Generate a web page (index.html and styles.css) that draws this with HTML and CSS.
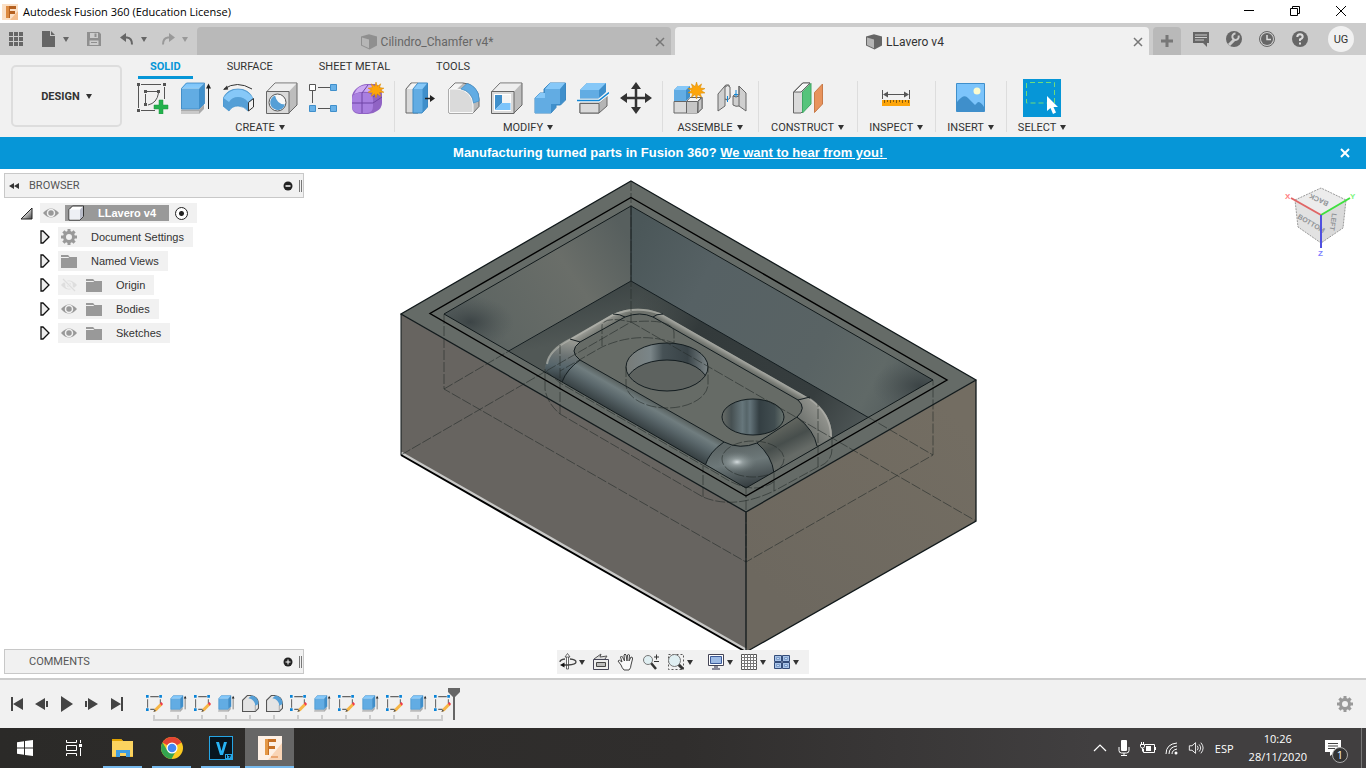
FILE: index.html
```html
<!DOCTYPE html>
<html lang="en">
  <head>
    <meta charset="UTF-8" />
    <title>Autodesk Fusion 360 (Education License)</title>
    <link rel="stylesheet" href="styles.css">
  </head>
  <body>
    <!-- shared icons -->
    <svg class="symbols" width="0" height="0" aria-hidden="true">
      <defs>
        <linearGradient id="blueTop" x1="0" y1="0" x2="0" y2="1">
          <stop offset="0" stop-color="#7cc4fb" /><stop offset="1" stop-color="#8ccdfb" />
        </linearGradient>
        <linearGradient id="arrowFill" x1="0" y1="0" x2="1" y2="1">
          <stop offset="0.3" stop-color="#fff" /><stop offset="1" stop-color="#444" />
        </linearGradient>
      </defs>
      <symbol id="i-cube" viewBox="0 0 16 16">
        <path d="M0 2.500 8 .300l8 2.200v9L8.500 15.500 0 11.500z" fill="#666" />
        <path d="M1 3.600 8 5.400v8.800L1 11z" fill="#b4b4b4" />
      </symbol>
      <symbol id="i-star" viewBox="0 0 16 16">
        <path d="M8 0l1.300 4.300L12.800 1.800 11.500 5.600 16 6.200 12.500 8l3.500 2.300-4.500.300 1.300 3.700-3.700-2.500L8 16 6.800 11.800 3.200 14.300l1.200-3.700L0 10.200 3.500 8 0 6.200l4.400-.6L3.200 1.800l3.600 2.500z" fill="#fda50a" stroke="#d98a00" stroke-width=".5" />
      </symbol>
      <symbol id="i-gear" viewBox="0 0 16 16">
        <path fill-rule="evenodd" fill="#999" d="M6.500 0h3v2.100l1.400.6L12.500 1.200l2.200 2.200-1.500 1.600.6 1.500H16v3h-2.200l-.6 1.500 1.500 1.600-2.200 2.200-1.600-1.500-1.400.6V16h-3v-2.100l-1.400-.6-1.600 1.500-2.200-2.200L2.800 11l-.6-1.500H0v-3h2.200L2.800 5 1.300 3.400l2.200-2.200 1.600 1.500 1.400-.6zM8 5a3 3 0 1 0 0 6 3 3 0 0 0 0-6z" />
      </symbol>
      <symbol id="i-eye" viewBox="0 0 16 16">
        <path d="M0 8Q8-1 16 8 8 17 0 8z" fill="#999" />
        <circle cx="8" cy="8" r="3.500" fill="none" stroke="#f1f1f1" stroke-width="1.500" />
        <circle cx="8" cy="8" r="1.500" fill="#999" />
      </symbol>
      <symbol id="i-eye-off" viewBox="0 0 16 16">
        <path d="M0 8Q8-1 16 8 8 17 0 8z" fill="#dedede" />
        <circle cx="8" cy="8" r="3" fill="none" stroke="#f1f1f1" stroke-width="1.500" />
        <path d="M2 2l12 12" stroke="#f1f1f1" stroke-width="3" /><path d="M2 2l12 12" stroke="#dedede" stroke-width="1.200" />
      </symbol>
      <symbol id="i-folder" viewBox="0 0 16 16">
        <path d="M0 2h7l2 2h7v11H0z" fill="#999" /><path d="M0 4.500h7.500l1-1" fill="none" stroke="#f1f1f1" />
      </symbol>
      <symbol id="i-expand" viewBox="0 0 10 14">
        <path d="M1 1h2l6 6-6 6H1z" fill="#eee" stroke="#111" stroke-width="1.300" />
      </symbol>
      <symbol id="i-extrude" viewBox="0 0 32 32">
        <path d="M1 27.500h18l5-5v4.500l-5 5H1z" fill="#aaa" /><path d="M1 29h18v3H1z" fill="#c9c9c9" />
        <path d="M1 6.500 6 1h18.500L19 6.500z" fill="url(#blueTop)" />
        <path d="M1 6.500h18V27H1z" fill="#62ace3" /><path d="M19 6.500 24.500 1v20.500L19 27z" fill="#3f8fcb" />
        <path d="M1.500 27V6.500l5-5.500H24.500v20.500L19 27z" fill="none" stroke="#3b87c1" stroke-width=".8" />
        <path d="M28.500 27V4" stroke="#222" /><path d="M26 6.500 28.500 1.500 31 6.500z" fill="#222" />
      </symbol>
      <symbol id="i-fillet" viewBox="0 0 32 32">
        <path d="M1 31V7l6-6h8a16 16 0 0 1 16 16v7.500L25 31z" fill="#b9b9b9" stroke="#666" />
        <path d="M1.500 7 7 1.500h8L9 7z" fill="#f4f4f4" />
        <path d="M1.500 30.500V7H9a16 16 0 0 1 16 16v7.500z" fill="#dadada" stroke="#fafafa" />
        <path d="M13 7l6-5.500A15.500 15.500 0 0 1 31 17v2l-5.500 2A15 15 0 0 0 13 7z" fill="#62ace3" stroke="#3f8fcb" stroke-width=".7" />
      </symbol>
      <symbol id="i-tfillet" viewBox="0 0 16 16">
        <path d="M.500 15.500V5L5 .500h3q7.500 1 7.500 8v4l-3 3z" fill="#e4e4e4" stroke="#555" />
        <path d="M12.500 15V9.500" stroke="#aaa" />
        <path d="M6 3l3-2.500q6.500 1 6.500 8L12.500 10Q12 4 6 3z" fill="#559fd6" />
      </symbol>
      <symbol id="i-tsketch" viewBox="0 0 16 16">
        <path d="M4 1.500h8M1.500 4v8M13.500 4v4M4 13.500h4" fill="none" stroke="#666" />
        <path d="M0 0h2.500v2.500H0zM12.500 0H15v2.500h-2.500zM0 12.500h2.500V15H0z" fill="#0a84d8" />
        <path d="M7 16l1.500-3.500 5-5 2 2-5.500 5.500z" fill="#f7b646" />
        <path d="M13 8 14.500 6.500 16 8.500 14.800 10z" fill="#f23b4c" /><path d="M7 16l1-2.500 1.500 1.500z" fill="#555" />
      </symbol>
      <symbol id="i-mini-x" viewBox="0 0 10 10"><path d="M1 1l8 8M9 1L1 9" fill="none" stroke="currentColor" stroke-width="1.500" /></symbol>
    </svg>

    <header class="titlebar">
      <svg class="app-icon" viewBox="0 0 16 16">
        <rect width="16" height="16" fill="#fbe0c6" /><path d="M8 16h8V7z" fill="#f4bd8c" />
        <path d="M4 2h10v3H8v2h5v3H8v4H4z" fill="#b5601f" /><path d="M4 2h3v12H4z" fill="#dd8a40" />
      </svg>
      <h1>Autodesk Fusion 360 (Education License)</h1>
      <div class="window-buttons">
        <button aria-label="Minimize"><svg viewBox="0 0 12 12"><path d="M1 5.500h10" /></svg></button>
        <button aria-label="Restore"><svg viewBox="0 0 12 12"><path d="M1.500 3.500h7v7h-7zM3.500 3.500v-2h7v7h-2" /></svg></button>
        <button aria-label="Close"><svg viewBox="0 0 12 12"><path d="M1 1l10 10M11 1L1 11" /></svg></button>
      </div>
    </header>

    <nav class="tabbar">
      <div class="quick">
        <button aria-label="Data panel"><svg viewBox="0 0 16 16" fill="#666"><path d="M1 1h4v4H1zM6 1h4v4H6zM11 1h4v4h-4zM1 6h4v4H1zM6 6h4v4H6zM11 6h4v4h-4zM1 11h4v4H1zM6 11h4v4H6zM11 11h4v4h-4z" /></svg></button>
        <button class="with-caret" aria-label="File"><svg viewBox="0 0 16 16"><path d="M1 0h8v5h5v11H1z" fill="#666" /><path d="M10 0l4 4h-4z" fill="#666" /></svg><i class="caret"></i></button>
        <button aria-label="Save"><svg viewBox="0 0 16 16"><path d="M1 1h12l2 2v12H1z" fill="#8f8f8f" /><path d="M4 2h8v5H4zM3.500 9.500h9V14h-9z" fill="#ccc" /><path d="M8.500 2.500h2v3.500h-2zM5 11h6v1H5z" fill="#8f8f8f" /></svg></button>
        <button class="with-caret" aria-label="Undo"><svg viewBox="0 0 16 16"><path d="M4 6.500h4q5 .500 5 7" fill="none" stroke="#666" stroke-width="2" /><path d="M7 2v9L1 6.500z" fill="#666" /></svg><i class="caret"></i></button>
        <button class="with-caret dim" aria-label="Redo"><svg viewBox="0 0 16 16"><path d="M12 6.500H8q-5 .500-5 7" fill="none" stroke="#999" stroke-width="2" /><path d="M9 2v9l6-4.500z" fill="#999" /></svg><i class="caret"></i></button>
      </div>
      <div class="tab">
        <svg class="faded" viewBox="0 0 16 16"><use href="#i-cube" /></svg>
        <span>Cilindro_Chamfer v4*</span>
        <button aria-label="Close Cilindro_Chamfer"><svg><use href="#i-mini-x" /></svg></button>
      </div>
      <div class="tab active">
        <svg viewBox="0 0 16 16"><use href="#i-cube" /></svg>
        <span>LLavero v4</span>
        <button aria-label="Close LLavero"><svg><use href="#i-mini-x" /></svg></button>
      </div>
      <button class="new-tab" aria-label="New design"><svg viewBox="0 0 14 14"><path d="M7 1v12M1 7h12" stroke="#777" stroke-width="3" /></svg></button>
      <div class="account">
        <button aria-label="Notifications"><svg viewBox="0 0 18 18"><path d="M1 2h16v11h-2v4l-4-4H1z" fill="#666" /><path d="M3 5h12M3 7.500h12M3 10h9" stroke="#ccc" /></svg></button>
        <button aria-label="Extensions"><svg viewBox="0 0 18 18"><circle cx="9" cy="9" r="8" fill="#666" /><path d="M4 15l5.500-5.500" stroke="#ccc" stroke-width="3" /><path d="M13.500 5.500a3.200 3.200 0 1 1-3-2" fill="none" stroke="#ccc" stroke-width="2" /></svg></button>
        <button aria-label="Job status"><svg viewBox="0 0 18 18"><circle cx="9" cy="9" r="7.500" fill="#ccc" stroke="#666" /><circle cx="9" cy="9" r="6" fill="#666" /><path d="M9 5v4.500h4" fill="none" stroke="#ddd" stroke-width="1.500" /></svg></button>
        <button aria-label="Help"><svg viewBox="0 0 18 18"><circle cx="9" cy="9" r="8" fill="#666" /><path d="M6.300 7q0-2.700 2.700-2.700T11.700 7Q11.500 8.500 9 9.500V11" fill="none" stroke="#ddd" stroke-width="2" /><path d="M8 12.500h2v2H8z" fill="#ddd" /></svg></button>
        <button class="avatar">UG</button>
      </div>
    </nav>

    <section class="ribbon">
      <button class="workspace">DESIGN <i class="caret"></i></button>
      <div class="ribbon-main">
        <div class="ribbon-tabs">
          <a href="#" class="current">SOLID</a>
          <a href="#">SURFACE</a>
          <a href="#">SHEET METAL</a>
          <a href="#">TOOLS</a>
        </div>
        <div class="groups">
          <div class="group">
            <div class="tools">
              <button aria-label="Create sketch"><svg viewBox="0 0 32 32"><path d="M4 2.500h20M1.500 4v22M27.500 5v12M4 28.500h14M8.500 12v10M10 9.500h11M21.500 11Q20 21 11 23" fill="none" stroke="#555" /><path d="M0 1h3v3H0zM26 1h3v3h-3zM0 27h3v3H0zM7 8h3v3H7zM20 8h3v3h-3zM7 21h3v3H7z" fill="#555" /><path d="M22 18h4v5h5v4h-5v5h-4v-5h-5v-4h5z" fill="#22b14c" stroke="#1c953e" stroke-width=".5" /></svg></button>
              <button aria-label="Extrude"><svg><use href="#i-extrude" /></svg></button>
              <button aria-label="Revolve"><svg viewBox="0 0 32 32"><path d="M0 16.500Q4 7 15 7t15 9.500l-5 12.500q-4-5-10-5T6 29L0 24z" fill="#559fd6" stroke="#3f8fcb" stroke-width=".7" /><path d="M.500 16Q6 7.500 15 7.500T30 16l-5 4q-4-5-10-5T6 20z" fill="#86c8f8" /><path d="M25.500 20.500l5-4v8.500l-5 4z" fill="#f2f2f2" stroke="#333" /><path d="M1 7q13-9 28 0" fill="none" stroke="#333" /><path d="M0 8l4-4.500 1.200 4z" fill="#333" /></svg></button>
              <button aria-label="Hole"><svg viewBox="0 0 32 32"><path d="M1 9.500 9 1h22v22l-8 8z" fill="#bdbdbd" stroke="#666" /><path d="M1.500 9.500 9 1.500h21.500L23 9.500z" fill="#eee" /><path d="M.500 9.500H23v22H.500z" fill="#dadada" stroke="#666" /><circle cx="11.500" cy="20.500" r="8.500" fill="#f8f8f8" stroke="#555" /><path d="M9 13.500a7.500 7.500 0 1 0 10 9q-8 0-10-9z" fill="#559fd6" /></svg></button>
              <button aria-label="Pattern"><svg viewBox="0 0 32 32"><path d="M9 5.500h12M3.500 9v12M9 26.500h12" stroke="#555" /><path d="M.500 2.500h6v6h-6z" fill="#fff" stroke="#555" /><path d="M21.500 2.500h6v6h-6zM.500 23.500h6v6h-6zM21.500 23.500h6v6h-6z" fill="#6ab2e8" stroke="#3f8fcb" /></svg></button>
              <button aria-label="Create form"><svg viewBox="0 0 32 32"><path d="M0 15q0-5 5-9t10-4h8q7 2 7 10v9q0 5-5 8-4 3-9 3H7q-7-1-7-7z" fill="#9063c4" /><path d="M5 7q4-4 11-4t10 3l-6 5q-9-3-18 1z" fill="#cdaaf4" /><path d="M0 17q0-5 6-6h10q5 1 5 7v6q0 7-6 7H7q-7-1-7-7z" fill="#a97fe0" /><path d="M10 11v20M0 21h21l9-6M10 11l6-8M21 15l9-6" fill="none" stroke="#6f45a5" /><svg x="16" y="0" width="16" height="16"><use href="#i-star" /></svg></svg></button>
            </div>
            <button class="group-label">CREATE <i class="caret"></i></button>
          </div>
          <div class="group">
            <div class="tools">
              <button aria-label="Press pull"><svg viewBox="0 0 32 32"><path d="M1 7l5-6h7v30H1z" fill="#dadada" stroke="#666" /><path d="M2 7l5-5.500h6V7z" fill="#f5f5f5" /><path d="M8 7l5-6h9.500v24L17 31H8z" fill="#3f8fcb" stroke="#3b87c1" /><path d="M8.500 7h9v23.500h-9z" fill="#62ace3" /><path d="M8.500 7 13 1.500h9L17.500 7z" fill="#86c8f8" /><path d="M20 16.500h6" stroke="#222" stroke-width="1.500" /><path d="M25 13l5 3.500-5 3.500z" fill="#222" /></svg></button>
              <button aria-label="Fillet"><svg><use href="#i-fillet" /></svg></button>
              <button aria-label="Shell"><svg viewBox="0 0 32 32"><path d="M1 9.500 9 1h22v22l-8 8z" fill="#bdbdbd" stroke="#666" /><path d="M1.500 9.500 9 1.500h21.500L23 9.500z" fill="#eee" /><path d="M.500 9.500H23v22H.500z" fill="#dadada" stroke="#666" /><path d="M3 12h17v17H3z" fill="#fff" /><path d="M4 13h7v8l-7 7z" fill="#3f8fcb" /><path d="M11 13h8.500v8H11z" fill="#f4f4f4" /><path d="M4 28l7-7h8.500v7z" fill="#7cc4fb" /></svg></button>
              <button aria-label="Combine"><svg viewBox="0 0 32 32"><path d="M1 16l5-5h4V7l6-6h15.500v17l-5 5H22v2.500L17 31H1z" fill="#3f8fcb" stroke="#3b87c1" /><path d="M1 16h10V7h15v15h-9v9H1z" fill="#62ace3" /><path d="M1 16l5-5h5v5zM11 7l5-6h15l-5 6z" fill="#86c8f8" /></svg></button>
              <button aria-label="Split body"><svg viewBox="0 0 32 32"><path d="M3 8l7-7h19v9l-6 7H3z" fill="#3f8fcb" /><path d="M3 8l7-7h19l-7 7z" fill="#86c8f8" /><path d="M3 8h19v8H3z" fill="#62ace3" /><path d="M3 21h19l8-7v10l-8 7H3z" fill="#b5b5b5" stroke="#666" /><path d="M3 21.500h19V31H3z" fill="#dadada" stroke="#666" /><path d="M0 18.500h22l10-8" fill="none" stroke="#f6f6f6" stroke-width="4" /><path d="M0 18.500h22l10-8" fill="none" stroke="#1187d6" stroke-width="1.500" /></svg></button>
              <button aria-label="Move"><svg viewBox="0 0 32 32"><path d="M16 5v22M5 16h22" stroke="#333" stroke-width="2.500" /><path d="M16 0l5 7H11zM16 32l5-7H11zM0 16l7-5v10zM32 16l-7-5v10z" fill="#333" /></svg></button>
            </div>
            <button class="group-label">MODIFY <i class="caret"></i></button>
          </div>
          <div class="group">
            <div class="tools">
              <button aria-label="New component"><svg viewBox="0 0 32 32"><path d="M1 19.500h15l4-4h9v11L24.500 31H1z" fill="#dadada" stroke="#666" /><path d="M13.500 31V19.500H25V31M25 19.500l4-4v11l-4.500 4.500z" fill="#c6c6c6" stroke="#666" /><path d="M13.500 19.500h11l4-4H17z" fill="#f5f5f5" stroke="#666" /><path d="M1 8l4-4h12v11l-4 4H1z" fill="#3f8fcb" /><path d="M1 8h12v11H1z" fill="#62ace3" /><path d="M1 8l4-4h12l-4 4z" fill="#86c8f8" /><svg x="15" y="0" width="17" height="17"><use href="#i-star" /></svg></svg></button>
              <button aria-label="Joint"><svg viewBox="0 0 32 32"><path d="M2 12 8 5q1-3 5-2l1 12-3 3-2-1v7l-7 5z" fill="#cfcfcf" stroke="#666" /><path d="M9 5v12q3 2 5-1V5q-2-3-5 0z" fill="#e8e8e8" stroke="#666" /><path d="M30 29V11l-7-7v9q-4-2-6 1v9q3 2 6 1z" fill="#cfcfcf" stroke="#666" /><path d="M23 4v20M17 14q3 2 6 0" fill="none" stroke="#666" /><path d="M11.500 14v6M20 8v7M18 12.500h4" stroke="#1187d6" /></svg></button>
            </div>
            <button class="group-label">ASSEMBLE <i class="caret"></i></button>
          </div>
          <div class="group">
            <div class="tools">
              <button aria-label="Construct plane"><svg viewBox="0 0 32 32"><path d="M1.500 31V10l9-9H18v21l-9 9z" fill="#dadada" stroke="#666" /><path d="M2 10l9-9h7l-9 9z" fill="#f8f8f8" stroke="#666" /><path d="M10.500 31V10L19 1.500V22z" fill="#56c47b" stroke="#3fa864" /><path d="M22.500 30.500V10.500l8-8.500v20z" fill="#e8935c" stroke="#c87a48" /></svg></button>
            </div>
            <button class="group-label">CONSTRUCT <i class="caret"></i></button>
          </div>
          <div class="group">
            <div class="tools">
              <button aria-label="Measure"><svg viewBox="0 0 32 32"><path d="M2.500 8v9M29.500 8v9M4 12.500h24" stroke="#555" /><path d="M3 12.500l5-3v6zM29 12.500l-5-3v6z" fill="#555" /><path d="M2 18h28v6H2z" fill="#fda50a" /><path d="M4.500 18v3M7.500 18v2M10.500 18v3M13.500 18v2M16.500 18v3M19.500 18v2M22.500 18v3M25.500 18v2M28.500 18v3" stroke="#8a5b08" /></svg></button>
            </div>
            <button class="group-label">INSPECT <i class="caret"></i></button>
          </div>
          <div class="group">
            <div class="tools">
              <button aria-label="Insert"><svg viewBox="0 0 32 32"><path d="M1.500 1.500h28v28h-28z" fill="#7cc4fb" stroke="#3f8fcb" /><path d="M2 20q7-9 11-4l7 7 3-3q3 0 6 5v4H2z" fill="#3f8fcb" /><circle cx="22" cy="9" r="3.500" fill="#fbfbcf" /></svg></button>
            </div>
            <button class="group-label">INSERT <i class="caret"></i></button>
          </div>
          <div class="group">
            <div class="tools">
              <button aria-label="Select" class="selected"><svg viewBox="0 0 32 32"><path d="M.500 1v20h28V.500H1" fill="none" stroke="#6fdc7b" stroke-dasharray="5 3" /><path d="M21 14v15l3.500-3 2.500 6 3-1.500L27.500 25H32z" fill="#fff" /></svg></button>
            </div>
            <button class="group-label">SELECT <i class="caret"></i></button>
          </div>
        </div>
      </div>
    </section>

    <div class="banner">
      <p>Manufacturing turned parts in Fusion 360? <a href="#">We want to hear from you!&nbsp;</a></p>
      <button aria-label="Dismiss"><svg viewBox="0 0 10 10"><path d="M1 1l8 8M9 1L1 9" stroke="#fff" stroke-width="2" /></svg></button>
    </div>

    <main class="viewport">
      <svg class="model" viewBox="0 169 1366 509" preserveAspectRatio="xMidYMid meet" role="img" aria-label="LLavero model">
        <defs>
          <linearGradient id="leftWall" gradientUnits="userSpaceOnUse" x1="470" y1="350" x2="631" y2="240">
            <stop offset="0" stop-color="#535b5b" /><stop offset=".2" stop-color="#5f6663" /><stop offset=".65" stop-color="#6a6e69" /><stop offset="1" stop-color="#575f5e" />
          </linearGradient>
          <linearGradient id="rightWall" gradientUnits="userSpaceOnUse" x1="631" y1="240" x2="920" y2="400">
            <stop offset="0" stop-color="#4b5759" /><stop offset=".25" stop-color="#566164" /><stop offset=".65" stop-color="#596364" /><stop offset=".85" stop-color="#606967" /><stop offset="1" stop-color="#50595a" />
          </linearGradient>
          <radialGradient id="corner"><stop offset="0" stop-color="#394143" stop-opacity=".9" /><stop offset=".5" stop-color="#424a4b" stop-opacity=".45" /><stop offset="1" stop-color="#4a5354" stop-opacity="0" /></radialGradient>
          <linearGradient id="floor" gradientUnits="userSpaceOnUse" x1="631" y1="281" x2="640" y2="330">
            <stop offset="0" stop-color="#3d4545" /><stop offset="1" stop-color="#515856" />
          </linearGradient>
          <linearGradient id="floorRight" gradientUnits="userSpaceOnUse" x1="640" y1="295" x2="870" y2="430">
            <stop offset="0" stop-color="#333a3b" stop-opacity="0" /><stop offset=".25" stop-color="#333a3b" /><stop offset=".75" stop-color="#363d3e" /><stop offset="1" stop-color="#525a5a" />
          </linearGradient>
          <linearGradient id="frontFillet" gradientUnits="userSpaceOnUse" x1="652" y1="401" x2="636" y2="429">
            <stop offset="0" stop-color="#59615f" /><stop offset=".2" stop-color="#707d7f" /><stop offset=".45" stop-color="#5b686c" /><stop offset="1" stop-color="#2d3537" />
          </linearGradient>
          <linearGradient id="rightFillet" gradientUnits="userSpaceOnUse" x1="777" y1="429" x2="791" y2="456">
            <stop offset="0" stop-color="#60645e" /><stop offset=".5" stop-color="#474e4c" /><stop offset="1" stop-color="#666b67" />
          </linearGradient>
          <linearGradient id="backFillet" gradientUnits="userSpaceOnUse" x1="725" y1="358" x2="729" y2="351">
            <stop offset="0" stop-color="#656a65" /><stop offset=".35" stop-color="#7d807a" /><stop offset="1" stop-color="#b6b7b1" />
          </linearGradient>
          <linearGradient id="leftFillet" gradientUnits="userSpaceOnUse" x1="603" y1="330" x2="598" y2="322">
            <stop offset="0" stop-color="#6e726c" /><stop offset="1" stop-color="#a2a39d" />
          </linearGradient>
          <linearGradient id="farCorner" gradientUnits="userSpaceOnUse" x1="567" y1="342" x2="562" y2="380">
            <stop offset="0" stop-color="#93958f" /><stop offset=".35" stop-color="#6d7474" /><stop offset=".65" stop-color="#56656b" /><stop offset="1" stop-color="#333c3f" />
          </linearGradient>
          <linearGradient id="sideCorner" gradientUnits="userSpaceOnUse" x1="804" y1="430" x2="828" y2="412">
            <stop offset="0" stop-color="#6b6f6b" /><stop offset="1" stop-color="#9a9b95" />
          </linearGradient>
          <linearGradient id="nearCorner" gradientUnits="userSpaceOnUse" x1="740" y1="445" x2="748" y2="487">
            <stop offset="0" stop-color="#5d6666" /><stop offset=".4" stop-color="#6d7879" /><stop offset="1" stop-color="#353d40" />
          </linearGradient>
          <radialGradient id="shine"><stop offset="0" stop-color="#d6dddf" /><stop offset=".3" stop-color="#a1abac" stop-opacity=".7" /><stop offset="1" stop-color="#6d7879" stop-opacity="0" /></radialGradient>
          <linearGradient id="holeWall">
            <stop offset="0" stop-color="#777b78" /><stop offset=".3" stop-color="#7a8588" /><stop offset=".45" stop-color="#465155" /><stop offset=".75" stop-color="#394347" /><stop offset="1" stop-color="#7c8587" />
          </linearGradient>
          <linearGradient id="holeDeep">
            <stop offset="0" stop-color="#696d68" /><stop offset=".15" stop-color="#465052" /><stop offset=".33" stop-color="#66767b" /><stop offset=".4" stop-color="#566569" /><stop offset=".45" stop-color="#64747a" /><stop offset=".6" stop-color="#343f43" /><stop offset=".85" stop-color="#414d50" /><stop offset="1" stop-color="#69746f" />
          </linearGradient>
          <linearGradient id="rightFace" gradientUnits="userSpaceOnUse" x1="780" y1="600" x2="960" y2="420">
            <stop offset="0" stop-color="#6d685f" /><stop offset="1" stop-color="#736d62" />
          </linearGradient>
          <clipPath id="cavity"><path d="M631 206 933 380 746 488 444 314z" /></clipPath>
          <clipPath id="hole"><ellipse cx="667" cy="367" rx="41" ry="24" /></clipPath>
        </defs>

        <!-- outer box -->
        <path d="M401 314 746 512v140L401 455z" fill="#676460" />
        <path d="M746 512 976 380v141L746 652z" fill="url(#rightFace)" />
        <path d="M631 181 976 380 746 512 401 314z" fill="#656b67" />
        <path d="M401 453 746 650" stroke="#c8c8c6" stroke-width="3" />

        <g clip-path="url(#cavity)">
          <path d="M631 206 933 380v80L631 281z" fill="url(#rightWall)" />
          <path d="M631 206 444 314v75L631 281z" fill="url(#leftWall)" />
          <ellipse cx="470" cy="322" rx="44" ry="26" fill="url(#corner)" />
          <ellipse cx="920" cy="386" rx="48" ry="28" fill="url(#corner)" />
          <path d="M631 281 933 455 746 562 444 389z" fill="url(#floor)" />
          <path d="M631 281 933 455 830 500 631 345z" fill="url(#floorRight)" />
          <!-- raised plug -->
          <path d="M545 372Q544 354 570 339L613 314Q637 304 660 313L807 397Q832 412 832 437V500H545z" fill="#646a66" />
          <path d="M570 339 613 314Q637 304 660 313L653 317Q640 311 625 317L580 342z" fill="url(#leftFillet)" />
          <path d="M660 313 807 397 798 400 653 317z" fill="url(#backFillet)" />
          <path d="M545 372Q544 354 570 339L580 342Q568 351 580 360 567 369 562 382z" fill="url(#farCorner)" />
          <path d="M547 364Q549 350 570 339.500L613 315Q637 305 660 314" fill="none" stroke="#b2b3ad" stroke-width="2" stroke-opacity=".7" />
          <path d="M807 397Q832 412 832 437L817 446Q814 430 797 417 804 409 798 400z" fill="url(#sideCorner)" />
          <path d="M810 399Q831 414 831 437" fill="none" stroke="#b0b1ab" stroke-width="2" stroke-opacity=".7" />
          <path d="M580 360 724 442Q711 452 705 466L562 382Q568 367 580 360z" fill="url(#frontFillet)" />
          <path d="M724 442Q740 448 757 443L771 455 774 473 746 490 705 466Q711 450 724 442z" fill="url(#nearCorner)" />
          <path d="M757 443 797 417Q812 428 817 446L774 473Q770 453 757 443z" fill="url(#rightFillet)" />
          <ellipse cx="737" cy="462" rx="20" ry="11" fill="url(#shine)" />
          <path d="M580 360Q568 351 580 342L625 317Q640 311 653 317L798 400Q807 408 797 417L757 443Q740 450 724 442z" fill="#666b66" />
          <ellipse cx="667" cy="367" rx="41" ry="24" fill="url(#holeWall)" />
          <ellipse cx="667" cy="384" rx="41" ry="24" fill="#5d625f" stroke="#141d20" clip-path="url(#hole)" />
          <ellipse cx="753" cy="417" rx="31" ry="18" fill="url(#holeDeep)" />
          <g fill="none" stroke="#141d20">
            <path d="M631 206v75L500 356M631 281l240 138" />
            <path d="M580 360Q568 351 580 342L625 317Q640 311 653 317L798 400Q807 408 797 417L757 443Q740 450 724 442z" />
            <path d="M580 360Q567 369 562 382M724 442Q709 452 705 466M757 443Q772 456 774 473M797 417Q814 430 817 446M798 400l12-3M570 339l10 3M613 314q7 0 12 3M663 314q-7 0-10 3" />
            <ellipse cx="667" cy="367" rx="41" ry="24" /><ellipse cx="753" cy="417" rx="31" ry="18" />
          </g>
        </g>

        <!-- hidden edges -->
        <g fill="none" stroke="#252c2a" stroke-opacity=".6" stroke-dasharray="10 2">
          <path d="M631 181v141L401 455M631 322 976 521M444 314v75L746 562 933 455V380M444 389l65-38M868 417l65 38M746 488v74" />
          <path d="M626 367v17a41 24 0 0 0 82 0v-17" /><ellipse cx="753" cy="459" rx="31" ry="18" />
          <path d="M545 369v20Q547 403 560 414L703 497Q734 510 774 491V473M703 497V466M560 414V345M602 346V325Q605 316 631 322 674 318 674 333V343L668 341Q635 332 602 347L560 371M832 437v12Q832 462 818 467L774 491M818 467V404M546 371l14 12 158 91q35 24 57 7" />
        </g>
        <!-- visible edges -->
        <g fill="none" stroke="#11191b">
          <path d="M631 181 976 380 746 512 401 314zM746 512v140l230-131V380" stroke-width="1.300" />
          <path d="M401 314v141" /><path d="M401 455 746 652" stroke="#000" stroke-width="2" />
          <path d="M631 197.500 947 380 746 496 430 313.500z" stroke="#000" stroke-width="1.400" />
          <path d="M631 206 933 380 746 488 444 314z" />
        </g>
      </svg>

      <div class="viewport-top">
        <aside class="browser">
          <header class="panel-bar">
            <svg class="collapse" viewBox="0 0 12 8"><path d="M5 1v6L0 4zM10 1v6L5 4z" fill="#333" /></svg>
            <h2>BROWSER</h2>
            <button aria-label="Collapse browser"><svg viewBox="0 0 10 10"><circle cx="5" cy="5" r="4.500" fill="#222" /><path d="M2.500 5h5" stroke="#fff" stroke-width="1.500" /></svg></button>
            <i class="grip"></i>
          </header>
          <ul class="tree">
            <li class="root">
              <svg class="opened" viewBox="0 0 13 13"><path d="M12 1v11H1z" fill="url(#arrowFill)" stroke="#222" /></svg>
              <div class="node">
                <svg><use href="#i-eye" /></svg>
                <span class="picked">
                  <svg viewBox="0 0 16 16"><path d="M1 4.500 4.500 1h11v10.500L12 15H1z" fill="#fff" stroke="#333" /><path d="M12 4.500 15 1.500v10l-3 3z" fill="#b9bcc9" /><path d="M1.500 4.500H12v10H1.500z" fill="#eef0f5" /></svg>
                  LLavero v4
                </span>
                <input type="radio" checked aria-label="Activate LLavero v4">
              </div>
            </li>
            <li><svg class="arrow"><use href="#i-expand" /></svg><div class="node"><svg><use href="#i-gear" /></svg><span>Document Settings</span></div></li>
            <li><svg class="arrow"><use href="#i-expand" /></svg><div class="node"><svg><use href="#i-folder" /></svg><span>Named Views</span></div></li>
            <li><svg class="arrow"><use href="#i-expand" /></svg><div class="node"><svg><use href="#i-eye-off" /></svg><svg><use href="#i-folder" /></svg><span>Origin</span></div></li>
            <li><svg class="arrow"><use href="#i-expand" /></svg><div class="node"><svg><use href="#i-eye" /></svg><svg><use href="#i-folder" /></svg><span>Bodies</span></div></li>
            <li><svg class="arrow"><use href="#i-expand" /></svg><div class="node"><svg><use href="#i-eye" /></svg><svg><use href="#i-folder" /></svg><span>Sketches</span></div></li>
          </ul>
        </aside>

        <svg class="viewcube" viewBox="1280 184 80 76" role="img" aria-label="View cube">
          <path d="M1321 188l25 12-25 15-26-15z" fill="#ececec" />
          <path d="M1295 200l26 15v28l-23-16z" fill="#e2e2e2" />
          <path d="M1346 200l-25 15v28l22-15z" fill="#dadada" />
          <path d="M1295 200l26-12 25 12-3 28-22 15-23-16z" fill="none" stroke="#999" stroke-dasharray="2 1" />
          <g class="cube-text">
            <text transform="translate(1329 202) rotate(205)">BACK</text>
            <text transform="translate(1297 218) rotate(30)">BOTTOM</text>
            <text transform="translate(1332 213) rotate(98)">LEFT</text>
          </g>
          <path d="M1291 198l30 17" stroke="#e06565" stroke-width="2" />
          <path d="M1321 215l29-17" stroke="#3fe03f" stroke-width="2" />
          <path d="M1321 215v33" stroke="#5050e0" stroke-width="2" />
          <g class="axis-text">
            <text x="1285" y="199" fill="#ff8080">X</text>
            <text x="1350" y="199" fill="#80f580">Y</text>
            <text x="1318" y="256" fill="#8080ff">Z</text>
          </g>
        </svg>
      </div>

      <div class="viewport-bottom">
        <section class="panel-bar comments">
          <h2>COMMENTS</h2>
          <button aria-label="Expand comments"><svg viewBox="0 0 10 10"><circle cx="5" cy="5" r="4.500" fill="#222" /><path d="M2.500 5h5M5 2.500v5" stroke="#fff" /></svg></button>
          <i class="grip"></i>
        </section>
        <div class="navbar">
          <button class="with-caret" aria-label="Orbit"><svg viewBox="0 0 18 18"><path d="M7.500 16V3.500h2V16z" fill="#fff" stroke="#444" stroke-width=".8" /><path d="M6 4l2.500-3.500L11 4z" fill="#fff" stroke="#444" stroke-width=".8" /><path d="M11 6q6 .5 6 3t-8 3H5M1 9q0-2.500 5-3" fill="none" stroke="#444" stroke-width="1.300" /><path d="M1 12l4.500-2.500v5z" fill="#111" /></svg><i class="caret"></i></button>
          <button aria-label="Look at"><svg viewBox="0 0 18 18"><path d="M2 6l7-5-1 3 7-1-2 3" fill="#ddd" stroke="#555" /><path d="M1.500 6.500h15v10h-15z" fill="#eee" stroke="#445" /><path d="M4.500 9.500h9v4h-9z" fill="#bbb" stroke="#444" /></svg></button>
          <button aria-label="Pan"><svg viewBox="0 0 18 18"><path d="M7 17q-2-2-3-5L1 8q1-2 4 1L3.500 4q1-2 2 0L7.500 8 7 2q1-2 2 0l1 6 .500-6q1.500-1 2 0L12 8l2-4q2 0 1.500 2L14 12q0 3-2 5z" fill="#fafafa" stroke="#444" /></svg></button>
          <button aria-label="Zoom"><svg viewBox="0 0 18 18"><path d="M9 10l5 6" stroke="#333" stroke-width="2.500" /><circle cx="6" cy="7" r="4.500" fill="#e0eff2" stroke="#777" /><path d="M12 4h5M14.500 1.500v5M12 8.500h5" stroke="#333" /></svg></button>
          <button class="with-caret fit" aria-label="Fit"><svg viewBox="0 0 18 18"><path d="M1.500 1.500h15v15h-15z" fill="none" stroke="#555" stroke-dasharray="2 2" /><path d="M11 11l5 5" stroke="#333" stroke-width="3" /><circle cx="7.500" cy="7.500" r="6" fill="#e0eff2" stroke="#777" /></svg><i class="caret"></i></button>
          <button class="with-caret" aria-label="Display settings"><svg viewBox="0 0 18 18"><path d="M1.500 1.500h15v11h-15z" fill="#fff" stroke="#445" /><path d="M3.500 3.500h11v7h-11z" fill="#9dbbe6" stroke="#3c5a9a" /><path d="M7 13h4v2H7zM5 15h8v2H5z" fill="#889" /></svg><i class="caret"></i></button>
          <button class="with-caret" aria-label="Grid and snaps"><svg viewBox="0 0 18 18"><path d="M1.500 1.500h15v15h-15z" fill="#fff" stroke="#555" /><path d="M4.500 1v16M7.500 1v16M10.500 1v16M13.500 1v16M1 4.500h16M1 7.500h16M1 10.500h16M1 13.500h16" stroke="#777" /></svg><i class="caret"></i></button>
          <button class="with-caret" aria-label="Viewports"><svg viewBox="0 0 18 18"><path d="M1.500 2.500h7v6h-7zM9.500 2.500h7v6h-7zM1.500 9.500h7v6h-7zM9.500 9.500h7v6h-7z" fill="#a9c4e8" stroke="#344d7a" /><path d="M3.500 4.500h3v2h-3zM11.500 4.500h3v2h-3zM3.500 11.500h3v2h-3zM11.500 11.500h3v2h-3z" fill="#c5d8f2" stroke="#7b9cca" /></svg><i class="caret"></i></button>
        </div>
      </div>
    </main>

    <footer class="timeline">
      <div class="playback">
        <button aria-label="Go to start"><svg viewBox="0 0 16 16"><path d="M2 1h2v14H2zM14 2v12L4 8z" /></svg></button>
        <button aria-label="Step back"><svg viewBox="0 0 16 16"><path d="M11 2v12L1 8zM12 5h2v6h-2z" /></svg></button>
        <button aria-label="Play"><svg viewBox="0 0 16 16"><path d="M2 0v16l12-8z" /></svg></button>
        <button aria-label="Step forward"><svg viewBox="0 0 16 16"><path d="M4 2v12l10-6zM1 5h2v6H1z" /></svg></button>
        <button aria-label="Go to end"><svg viewBox="0 0 16 16"><path d="M12 1h2v14h-2zM2 2v12l10-6z" /></svg></button>
      </div>
      <ol class="features">
        <li><svg><use href="#i-tsketch" /></svg></li>
        <li><svg><use href="#i-extrude" /></svg></li>
        <li><svg><use href="#i-tsketch" /></svg></li>
        <li><svg><use href="#i-extrude" /></svg></li>
        <li><svg><use href="#i-tfillet" /></svg></li>
        <li><svg><use href="#i-tfillet" /></svg></li>
        <li><svg><use href="#i-tsketch" /></svg></li>
        <li><svg><use href="#i-extrude" /></svg></li>
        <li><svg><use href="#i-tsketch" /></svg></li>
        <li><svg><use href="#i-extrude" /></svg></li>
        <li><svg><use href="#i-tsketch" /></svg></li>
        <li><svg><use href="#i-extrude" /></svg></li>
        <li><svg><use href="#i-tsketch" /></svg></li>
      </ol>
      <svg class="marker" viewBox="0 0 12 32"><path d="M0 0h12v4L7 9v23H5V9L0 4z" fill="#666" /></svg>
      <button class="settings" aria-label="Timeline settings"><svg><use href="#i-gear" /></svg></button>
    </footer>

    <div class="taskbar">
      <button aria-label="Start"><svg viewBox="0 0 16 16" fill="#fff"><path d="M0 2.300 7 1.300v6.200H0zM8 1.100 16 0v7.500H8zM0 8.500h7v6.200l-7-1zM8 8.500h8V16l-8-1.100z" /></svg></button>
      <button aria-label="Task view"><svg viewBox="0 0 16 16" fill="none" stroke="#fff"><path d="M.500 0v2.500h10V0M.500 5.500h10v5H.500zM.500 16v-2.500h10V16M14.500 0v3M14.500 8v8" /><path d="M13 4h3v3h-3z" fill="#fff" stroke="none" /></svg></button>
      <button class="running" aria-label="File Explorer"><svg class="big" viewBox="0 0 24 24"><path d="M1 3h9l2 2h10v15H1z" fill="#fbd35f" /><path d="M1 3h9l2 2H1z" fill="#e0a200" /><path d="M5 14h14v7h-4v-4H9v4H5z" fill="#3f9ee2" /><path d="M1 20h4v1H1zM19 20h3v1h-3z" fill="#f3bd38" /></svg></button>
      <button class="running" aria-label="Chrome"><svg class="big" viewBox="0 0 24 24"><circle cx="12" cy="12" r="11" fill="#fbc921" /><path d="M12 12 2.500 6.500A11 11 0 0 1 21.500 6.500z" fill="#e44434" /><path d="M2.500 6.500A11 11 0 0 0 11.500 23L17 13 12 12 7 14z" fill="#34a450" /><circle cx="12" cy="12" r="5.500" fill="#fff" /><circle cx="12" cy="12" r="4.300" fill="#4487f3" /></svg></button>
      <button class="running" aria-label="VEGAS"><svg class="big" viewBox="0 0 24 24"><rect x=".5" y=".5" width="23" height="23" fill="#07151f" stroke="#25a5e5" /><path d="M7 6h3l2.500 9L15 6h3l-4 13h-3z" fill="#27b3f5" /><path d="M16 18h7v5h-7z" fill="#25a5e5" /><path d="M17.500 19v3M19 19.500h2.500L20 22" fill="none" stroke="#07151f" /></svg></button>
      <button class="running current" aria-label="Fusion 360"><svg class="big" viewBox="0 0 24 24"><rect width="24" height="24" fill="#fdf0e5" /><path d="M10 24h14V7z" fill="#f9d4b5" /><path d="M7 3h11v3h-7v4h6v3h-6v6H7z" fill="#c56f24" /><path d="M7 3h3v16H7z" fill="#e59845" /><path d="M13 21h7" stroke="#e9a673" stroke-width="2" /></svg></button>
      <div class="tray">
        <button aria-label="Show hidden icons"><svg viewBox="0 0 16 16"><path d="M2 11l6-6 6 6" fill="none" stroke="#fff" stroke-width="1.200" /></svg></button>
        <svg viewBox="0 0 16 16"><rect x="5" y="0" width="6" height="11" rx="1" fill="#fff" /><path d="M3 7v3.500q0 2.500 2.500 2.500h5q2.500 0 2.500-2.500V7M8 13v2.500M5 15.500h6" fill="none" stroke="#fff" /></svg>
        <svg viewBox="0 0 16 16" fill="none" stroke="#fff"><path d="M5 4.500h9.500v8H3.500V9M15.500 7v3M1.500 2v2M3.500 2v2M.500 4.500h4v2q0 1.500-2 1.500t-2-1.500zM2.500 8v3.500" /><path d="M6 6h5v5H6z" fill="#fff" stroke="none" /></svg>
        <svg viewBox="0 0 16 16" fill="none" stroke="#fff"><path d="M2 14Q2 4 13 3M5 14q0-7 8-8M8 14q0-4 5-5" /><circle cx="12" cy="13" r="1.500" fill="#fff" stroke="none" /></svg>
        <svg viewBox="0 0 18 16" fill="none" stroke="#fff"><path d="M1.500 5.500h3l4-3.500v12l-4-3.500h-3zM10.500 5.500q2 2.500 0 5M12.500 4q3.500 4 0 8M14.500 2q5 6 0 12" /></svg>
        <span class="lang">ESP</span>
        <div class="clock"><time>10:26</time><time>28/11/2020</time></div>
        <button class="notice" aria-label="Notifications"><svg viewBox="0 0 16 16"><path d="M0 0h16v12h-6l-5 4v-4H0z" fill="#fff" /><path d="M3 3.500h10M3 6h10M3 8.500h7" stroke="#444" /></svg><span>1</span></button>
        <i class="peek"></i>
      </div>
    </div>
  </body>
</html>
```
FILE: styles.css
```css
* {
  box-sizing: border-box;
}
body {
  margin: 0;
  min-height: 100vh;
  display: flex;
  flex-direction: column;
  font-family: Roboto, Arial, sans-serif;
  font-size: 11px;
  color: #333;
  background: #fff;
}
h1, h2, p, ul, ol {
  margin: 0;
  padding: 0;
  font-weight: normal;
  list-style: none;
}
button {
  display: flex;
  align-items: center;
  justify-content: center;
  padding: 0;
  border: 0;
  background: none;
  font: inherit;
  color: inherit;
}
svg {
  display: block;
  flex: none;
}
.symbols {
  position: absolute;
}
.caret {
  width: 0;
  border: 3px solid transparent;
  border-top: 5px solid currentColor;
  border-bottom: 0;
}

/* title bar */
.titlebar {
  display: flex;
  align-items: center;
  height: 23px;
  padding-left: 2px;
}
.app-icon {
  width: 16px;
  height: 16px;
}
.titlebar h1 {
  flex: 1;
  padding-left: 5px;
  font-family: "Open Sans", sans-serif;
  font-size: 11px;
  color: #000;
}
.window-buttons {
  display: flex;
  padding-right: 2px;
}
.window-buttons button {
  width: 46px;
  height: 20px;
}
.window-buttons svg {
  width: 12px;
  height: 12px;
  margin-bottom: 2px;
  fill: none;
  stroke: #000;
}

/* document tabs */
.tabbar {
  display: flex;
  align-items: flex-end;
  gap: 4px;
  height: 32px;
  background: #ccc;
}
.quick {
  display: flex;
  align-self: stretch;
  align-items: center;
  gap: 17px;
  width: 193px;
  padding-left: 8px;
  color: #666;
}
.quick svg {
  width: 16px;
  height: 16px;
}
.with-caret,
.quick .with-caret {
  gap: 6px;
}
.quick .dim {
  margin-left: -4px;
  color: #999;
}
.tab {
  display: flex;
  flex: 1;
  align-items: center;
  justify-content: center;
  gap: 4px;
  height: 28px;
  padding: 1px 0 0 12px;
  border-radius: 4px 4px 0 0;
  background: #b9b9b9;
  font-size: 12px;
  color: #666;
}
.tab.active {
  background: #f1f1f1;
  color: #333;
}
.tab > svg {
  width: 16px;
  height: 16px;
  margin-left: auto;
}
.faded {
  opacity: 0.5;
}
.tab button {
  width: 22px;
  margin-left: auto;
  color: #777;
}
.tab button svg {
  width: 10px;
  height: 10px;
}
.new-tab {
  width: 28px;
  height: 28px;
  border-radius: 4px 4px 0 0;
  background: #b9b9b9;
}
.new-tab svg {
  width: 14px;
  height: 14px;
}
.account {
  display: flex;
  align-self: stretch;
  align-items: center;
  gap: 15px;
  padding: 0 12px 0 7px;
}
.account svg {
  width: 18px;
  height: 18px;
}
.avatar {
  width: 26px;
  height: 26px;
  margin-left: 4px;
  border-radius: 50%;
  background: #f1f1f1;
}

/* ribbon */
.ribbon {
  display: flex;
  height: 82px;
  background: #f1f1f1;
}
.workspace {
  gap: 6px;
  width: 111px;
  height: 62px;
  margin: 10px 9px 0 11px;
  border: 2px solid #ddd;
  border-radius: 5px;
  font-weight: bold;
}
.ribbon-tabs {
  display: flex;
  gap: 22px;
  padding-left: 7px;
}
.ribbon-tabs a {
  height: 24px;
  padding: 0 12px;
  border-bottom: 3px solid transparent;
  line-height: 23px;
  text-align: center;
  text-decoration: none;
  color: #333;
}
.ribbon-tabs .current {
  border-color: #0696d7;
  font-weight: bold;
  color: #0696d7;
}
.groups {
  display: flex;
}
.group {
  position: relative;
  padding: 0 5px;
}
.group:first-child {
  padding-left: 0;
}
.group + .group::before {
  content: "";
  position: absolute;
  top: 2px;
  left: 0;
  width: 1px;
  height: 51px;
  background: #ddd;
}
.tools {
  display: flex;
  justify-content: center;
}
.tools button {
  width: 43px;
  height: 38px;
}
.tools button > svg {
  width: 32px;
  height: 32px;
}
.tools .selected {
  width: 38px;
  background: #0696d7;
}
.group-label {
  gap: 4px;
  width: 100%;
  height: 20px;
  padding: 0 8px;
}
.group:nth-child(n+5) .group-label {
  padding: 0 7px;
}

/* message banner */
.banner {
  display: flex;
  align-items: center;
  height: 32px;
  padding-right: 16px;
  background: #0696d7;
  color: #fff;
}
.banner p {
  flex: 1;
  padding-bottom: 1px;
  font: bold 13px "Liberation Sans", Arial, sans-serif;
  text-align: center;
}
.banner a {
  color: #fff;
}
.banner svg {
  width: 10px;
  height: 10px;
}

/* modelling canvas */
.viewport {
  position: relative;
  display: flex;
  flex: 1;
  flex-direction: column;
  justify-content: space-between;
  padding: 4px;
}
.model {
  position: absolute;
  inset: 0;
  width: 100%;
  height: 100%;
}
.viewport-top {
  position: relative;
  display: flex;
  justify-content: space-between;
}
.browser {
  width: 300px;
}
.panel-bar {
  display: flex;
  align-items: center;
  height: 25px;
  padding: 0 0 0 4px;
  border: 1px solid #c8c8c8;
  background: #f1f1f1;
}
.panel-bar h2 {
  flex: 1;
  padding-left: 8px;
  font-size: 11px;
  color: #555;
}
.collapse {
  width: 12px;
  height: 8px;
}
.panel-bar button svg {
  width: 10px;
  height: 10px;
}
.grip {
  width: 3px;
  height: 12px;
  margin: 0 1px 0 6px;
  border: 1px solid #777;
  border-width: 0 1px;
}
.tree {
  padding: 3px 0 0 36px;
  font: 11px "Liberation Sans", Arial, sans-serif;
}
.tree li {
  display: flex;
  align-items: center;
  gap: 8px;
  height: 24px;
}
.tree .root {
  margin-left: -20px;
}
.arrow {
  width: 10px;
  height: 14px;
}
.root .opened {
  width: 13px;
  height: 13px;
  margin-right: -1px;
}
.node {
  display: flex;
  align-items: center;
  gap: 9px;
  height: 20px;
  padding: 0 9px 0 3px;
  background: #f1f1f1;
}
.node svg {
  width: 16px;
  height: 16px;
}
.node > span {
  padding-left: 5px;
}
.root .node {
  gap: 6px;
}
.node .picked {
  display: flex;
  align-items: center;
  gap: 14px;
  height: 16px;
  padding: 0 13px 0 3px;
  background: #999;
  font-weight: bold;
  color: #fff;
}
.node input {
  appearance: none;
  width: 13px;
  height: 13px;
  margin: 0;
  border: 1px solid #222;
  border-radius: 50%;
  background: radial-gradient(#222 2px, #fff 3px);
}
.viewcube {
  width: 80px;
  height: 76px;
  margin: 11px 2px 0 0;
}
.cube-text {
  font: bold 7px "Liberation Sans", Arial, sans-serif;
  fill: #909396;
}
.axis-text {
  font: bold 8px "Liberation Sans", Arial, sans-serif;
}
.viewport-bottom {
  position: relative;
  display: grid;
  grid-template-columns: 1fr auto 1fr;
  align-items: end;
}
.comments {
  width: 300px;
  padding-left: 16px;
}
.navbar {
  display: flex;
  align-items: center;
  gap: 7px;
  height: 24px;
  padding: 0 10px 0 2px;
  background: #f1f1f1;
}
.navbar svg {
  width: 18px;
  height: 18px;
}
.navbar .with-caret {
  gap: 2px;
}
.navbar .fit {
  margin-right: 7px;
}

/* timeline */
.timeline {
  display: flex;
  align-items: center;
  height: 50px;
  padding: 0 13px 0 9px;
  border-top: 2px solid #ccc;
  background: #f1f1f1;
}
.playback {
  display: flex;
  gap: 9px;
  fill: #444;
}
.playback svg,
.settings svg {
  width: 16px;
  height: 16px;
}
.features {
  display: flex;
  padding: 0 6px 0 17px;
}
.features li {
  position: relative;
  width: 24px;
  height: 34px;
  padding: 8px 0 0 4px;
}
.features svg {
  width: 17px;
  height: 17px;
}
.features li::before {
  content: "";
  position: absolute;
  left: 0;
  right: 0;
  bottom: 0;
  height: 2px;
  background: #ccc;
}
.features li::after {
  content: "";
  position: absolute;
  left: 11px;
  bottom: 0;
  width: 2px;
  height: 6px;
  background: #ccc;
}
.features li:first-child::before {
  left: 11px;
}
.features li:last-child::before {
  right: 11px;
}
.marker {
  width: 12px;
  height: 32px;
  margin-left: -12px;
}
.settings {
  margin-left: auto;
}

/* windows taskbar */
.taskbar {
  display: flex;
  height: 40px;
  background: linear-gradient(90deg, #2b2a28, #302e2d 50%, #413f40 80%);
  color: #fff;
  font-family: "Open Sans", sans-serif;
}
.taskbar > button {
  width: 49px;
}
.taskbar svg {
  width: 16px;
  height: 16px;
}
.taskbar .big {
  width: 24px;
  height: 24px;
}
.running {
  background: linear-gradient(#76b9ed, #76b9ed) bottom / 39px 2px no-repeat;
}
.taskbar .current {
  background-color: #666;
  background-size: 100% 2px;
}
.tray {
  display: flex;
  align-items: center;
  gap: 8px;
  margin-left: auto;
}
.lang {
  padding: 0 7px 0 3px;
}
.clock {
  display: flex;
  flex-direction: column;
  text-align: center;
  line-height: 18px;
}
.notice {
  position: relative;
  margin: 0 12px 0 10px;
}
.notice span {
  position: absolute;
  top: 7px;
  left: 7px;
  width: 16px;
  height: 16px;
  border: 1px solid #aaa;
  border-radius: 50%;
  background: #333;
  line-height: 14px;
  text-align: center;
}
.peek {
  width: 1px;
  height: 40px;
  margin-right: 4px;
  background: #777;
}
```
